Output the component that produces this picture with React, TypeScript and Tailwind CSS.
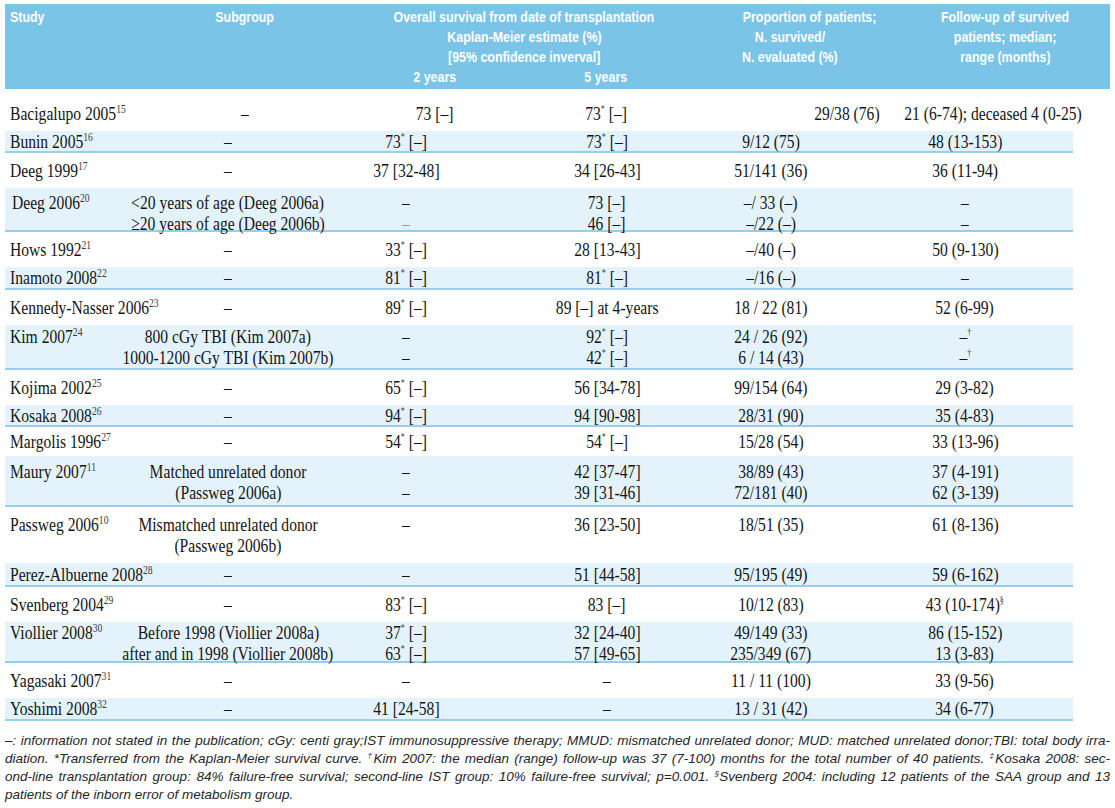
import React from "react";

type Row = {
  study: string;
  sub: string[];
  y2: string[];
  y5: string[];
  n: string[];
  f: string[];
  cls: string;
  first?: boolean;
};

const rows: Row[] = [
  { study: "Bacigalupo 2005{15}", sub: ["–"], y2: ["73 [–]"], y5: ["73{*} [–]"], n: ["29/38 (76)"], f: ["21 (6-74); deceased 4 (0-25)"], cls: "h-[42px] pt-[6px]", first: true },
  { study: "Bunin 2005{16}", sub: ["–"], y2: ["73{*} [–]"], y5: ["73{*} [–]"], n: ["9/12 (75)"], f: ["48 (13-153)"], cls: "h-[22px] bg-[#e4f3fb] border-b-2 border-[#95cfec]" },
  { study: "Deeg 1999{17}", sub: ["–"], y2: ["37 [32-48]"], y5: ["34 [26-43]"], n: ["51/141 (36)"], f: ["36 (11-94)"], cls: "h-[35px]" },
  { study: " Deeg 2006{20}", sub: ["<20 years of age (Deeg 2006a)", "≥20 years of age (Deeg 2006b)"], y2: ["–", "!–"], y5: ["73 [–]", "46 [–]"], n: ["–/ 33 (–)", "–/22 (–)"], f: ["–", "–"], cls: "h-[44px] pt-[4px] bg-[#e4f3fb] border-b-2 border-[#95cfec]" },
  { study: "Hows 1992{21}", sub: ["–"], y2: ["33{*} [–]"], y5: ["28 [13-43]"], n: ["–/40 (–)"], f: ["50 (9-130)"], cls: "h-[35px]" },
  { study: "Inamoto 2008{22}", sub: ["–"], y2: ["81{*} [–]"], y5: ["81{*} [–]"], n: ["–/16 (–)"], f: ["–"], cls: "h-[23px] bg-[#e4f3fb] border-b-2 border-[#95cfec]" },
  { study: "Kennedy-Nasser 2006{23}", sub: ["–"], y2: ["89{*} [–]"], y5: ["89 [–] at 4-years"], n: ["18 / 22 (81)"], f: ["52 (6-99)"], cls: "h-[35px]" },
  { study: "Kim 2007{24}", sub: ["800 cGy TBI (Kim 2007a)", "1000-1200 cGy TBI (Kim 2007b)"], y2: ["–", "–"], y5: ["92{*} [–]", "42{*} [–]"], n: ["24 / 26 (92)", "6 / 14 (43)"], f: ["–{†}", "–{†}"], cls: "h-[45px] bg-[#e4f3fb] border-b-2 border-[#95cfec]" },
  { study: "Kojima 2002{25}", sub: ["–"], y2: ["65{*} [–]"], y5: ["56 [34-78]"], n: ["99/154 (64)"], f: ["29 (3-82)"], cls: "h-[35px]" },
  { study: "Kosaka 2008{26}", sub: ["–"], y2: ["94{*} [–]"], y5: ["94 [90-98]"], n: ["28/31 (90)"], f: ["35 (4-83)"], cls: "h-[22px] bg-[#e4f3fb] border-b-2 border-[#95cfec]" },
  { study: "Margolis 1996{27}", sub: ["–"], y2: ["54{*} [–]"], y5: ["54{*} [–]"], n: ["15/28 (54)"], f: ["33 (13-96)"], cls: "h-[29px]" },
  { study: "Maury 2007{11}", sub: ["Matched unrelated donor", "(Passweg 2006a)"], y2: ["–", "–"], y5: ["42 [37-47]", "39 [31-46]"], n: ["38/89 (43)", "72/181 (40)"], f: ["37 (4-191)", "62 (3-139)"], cls: "h-[51px] pt-[2px] bg-[#e4f3fb] border-b-2 border-[#95cfec]" },
  { study: "Passweg 2006{10}", sub: ["Mismatched unrelated donor", "(Passweg 2006b)"], y2: ["–"], y5: ["36 [23-50]"], n: ["18/51 (35)"], f: ["61 (8-136)"], cls: "h-[56px]" },
  { study: "Perez-Albuerne 2008{28}", sub: ["–"], y2: ["–"], y5: ["51 [44-58]"], n: ["95/195 (49)"], f: ["59 (6-162)"], cls: "h-[24px] bg-[#e4f3fb] border-b-2 border-[#95cfec]" },
  { study: "Svenberg 2004{29}", sub: ["–"], y2: ["83{*} [–]"], y5: ["83 [–]"], n: ["10/12 (83)"], f: ["43 (10-174){§}"], cls: "h-[35px]" },
  { study: "Viollier 2008{30}", sub: ["Before 1998 (Viollier 2008a)", "after and in 1998 (Viollier 2008b)"], y2: ["37{*} [–]", "63{*} [–]"], y5: ["32 [24-40]", "57 [49-65]"], n: ["49/149 (33)", "235/349 (67)"], f: ["86 (15-152)", "13 (3-83)"], cls: "h-[41px] bg-[#e4f3fb] border-b-2 border-[#95cfec]" },
  { study: "Yagasaki 2007{31}", sub: ["–"], y2: ["–"], y5: ["–"], n: ["11 / 11 (100)"], f: ["33 (9-56)"], cls: "h-[35px]" },
  { study: "Yoshimi 2008{32}", sub: ["–"], y2: ["41 [24-58]"], y5: ["–"], n: ["13 / 31 (42)"], f: ["34 (6-77)"], cls: "h-[23px] bg-[#e4f3fb] border-b-2 border-[#95cfec]" },
];

function Txt({ s, left }: { s: string; left?: boolean }) {
  let dim = false;
  let str = s;
  if (str.startsWith("!")) {
    dim = true;
    str = str.slice(1);
  }
  const parts = str.split(/(\{[^}]*\})/);
  const base = left
    ? "inline-block whitespace-nowrap scale-x-[0.8] origin-left"
    : "inline-block whitespace-nowrap scale-x-[0.8] origin-center";
  return (
    <span className={base + (dim ? " text-[#9a9a9a]" : "")}>
      {parts.map((p, i) => {
        if (!p.startsWith("{")) return <React.Fragment key={i}>{p}</React.Fragment>;
        const c = p.slice(1, -1);
        const small = c === "*" || c === "†" || c === "§";
        return (
          <sup
            key={i}
            className={small ? "text-[10px] -top-[8px] text-[#3a3a3a]" : "text-[12px] -top-[7px] text-[#3a3a3a]"}
          >
            {c}
          </sup>
        );
      })}
    </span>
  );
}

function Cell({ lines, count, cls, left }: { lines: string[]; count: number; cls: string; left?: boolean }) {
  const all: string[] = [];
  for (let i = 0; i < count; i++) all.push(lines[i] ?? "");
  return (
    <div className={"flex flex-col " + cls}>
      {all.map((l, i) => (
        <div
          key={i}
          className={
            left
              ? "h-[21px] leading-[21px] whitespace-nowrap flex justify-start"
              : "h-[21px] leading-[21px] whitespace-nowrap flex justify-center"
          }
        >
          {l ? <Txt s={l} left={left} /> : null}
        </div>
      ))}
    </div>
  );
}

function BodyRow({ r }: { r: Row }) {
  const count = Math.max(r.sub.length, r.y2.length, r.y5.length, r.n.length, r.f.length);
  const grid = r.first
    ? "grid grid-cols-[117px_246px_134px_208px_184px_179px] items-center"
    : "grid grid-cols-[117px_212px_144px_258px_84px_253px] items-center";
  return (
    <div className={grid + " " + r.cls}>
      <Cell lines={[r.study.trim()]} count={count} left cls={r.study.startsWith(" ") ? "pl-[7px]" : "pl-[5px]"} />
      <Cell lines={r.sub} count={count} cls="" />
      <Cell lines={r.y2} count={count} cls="" />
      <Cell lines={r.y5} count={count} cls="" />
      <Cell lines={r.n} count={count} cls={r.first ? "pl-[90px]" : "pr-[14px]"} />
      <Cell lines={r.f} count={count} cls={r.first ? "pl-[19px]" : "pl-[37px]"} />
    </div>
  );
}

function H({ children, left, cls }: { children: React.ReactNode; left?: boolean; cls?: string }) {
  return (
    <div className={"flex whitespace-nowrap " + (left ? "justify-start " : "justify-center ") + (cls ?? "")}>
      <span className={left ? "inline-block scale-x-[0.8] origin-left" : "inline-block scale-x-[0.8] origin-center"}>
        {children}
      </span>
    </div>
  );
}

function Header() {
  return (
    <div className="w-[1105px] h-[85px] bg-[#79c4e7] pt-[3px] grid grid-cols-[117px_246px_342px_160px_240px] font-['Liberation_Sans',Arial,sans-serif] font-bold text-white text-[15.5px] leading-[20px]">
      <H left cls="pl-[5px]">Study</H>
      <H>Subgroup</H>
      <div className="flex flex-col">
        <div className="flex flex-col pr-[30px]">
          <H>Overall survival from date of transplantation</H>
          <H>Kaplan-Meier estimate (%)</H>
          <H>[95% confidence inverval]</H>
        </div>
        <div className="grid grid-cols-[134px_208px]">
          <H>2 years</H>
          <H>5 years</H>
        </div>
      </div>
      <div className="flex flex-col">
        <H cls="pl-[40px]">Proportion of patients;</H>
        <H>N. survived/</H>
        <H>N. evaluated (%)</H>
      </div>
      <div className="flex flex-col pl-[30px]">
        <H>Follow-up of survived</H>
        <H>patients; median;</H>
        <H>range (months)</H>
      </div>
    </div>
  );
}

function FootSup({ c }: { c: string }) {
  return <sup className="text-[8px] -top-[5px]">{c}</sup>;
}

function Footnote() {
  const line = "text-justify [text-align-last:justify]";
  return (
    <div className="w-[1105px] mt-[11px] font-['Liberation_Sans',Arial,sans-serif] italic text-[13.5px] leading-[18px] text-[#262626]">
      <div className={line}>
        –: information not stated in the publication; cGy: centi gray;IST immunosuppressive therapy; MMUD: mismatched unrelated donor; MUD: matched unrelated donor;TBI: total body irra-
      </div>
      <div className={line}>
        diation. *Transferred from the Kaplan-Meier survival curve. <FootSup c="†" />Kim 2007: the median (range) follow-up was 37 (7-100) months for the total number of 40 patients. <FootSup c="‡" />Kosaka 2008: sec-
      </div>
      <div className={line}>
        ond-line transplantation group: 84% failure-free survival; second-line IST group: 10% failure-free survival; p=0.001. <FootSup c="§" />Svenberg 2004: including 12 patients of the SAA group and 13
      </div>
      <div>patients of the inborn error of metabolism group.</div>
    </div>
  );
}

export default function App() {
  return (
    <div className="w-[1115px] h-[808px] bg-white pt-[4px] pl-[5px] overflow-hidden">
      <Header />
      <div className="w-[1068px] font-['Liberation_Serif','Times_New_Roman',serif] text-[19.5px] text-[#141414]">
        {rows.map((r, i) => (
          <BodyRow key={i} r={r} />
        ))}
      </div>
      <Footnote />
    </div>
  );
}
